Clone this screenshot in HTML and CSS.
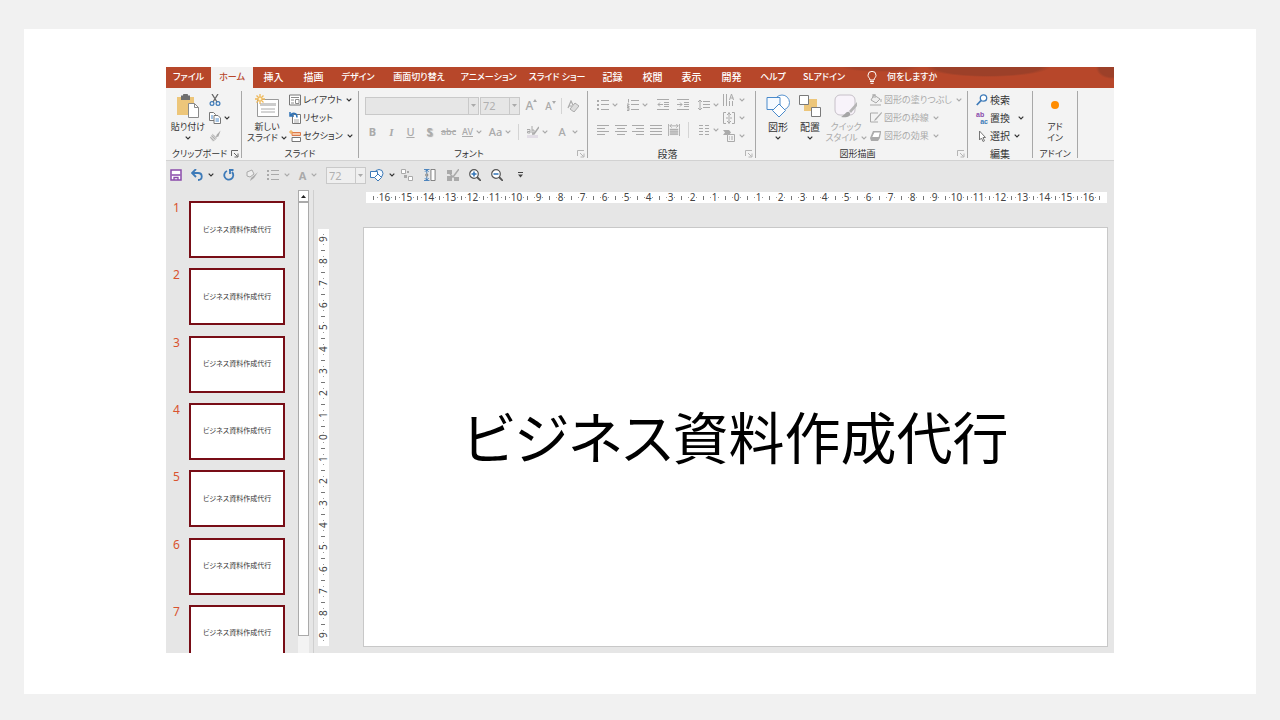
FILE: index.html
```html
<!DOCTYPE html>
<html lang="ja">
<head>
<meta charset="utf-8">
<title>ビジネス資料作成代行</title>
<link rel="stylesheet" href="styles.css">
</head>
<body>
<svg class="defs" aria-hidden="true">
  <symbol id="caret" viewBox="0 0 6 4"><path d="M.7.7 3 3 5.300.7" fill="none" stroke="currentColor" stroke-width="1.200"/></symbol>
  <symbol id="tri" viewBox="0 0 5 3"><path d="M0 0h5L2.500 3z" fill="currentColor"/></symbol>
  <symbol id="launch" viewBox="0 0 8 8"><path d="M.5 6V.5H7M3 3l3.500 3.500M7 3.500V7H3.500" fill="none" stroke="currentColor"/></symbol>
  <symbol id="bullets" viewBox="0 0 12 12"><path d="M4 1.500h8M4 5.500h8M4 10.500h8" stroke="currentColor"/><path d="M0 1h2v2H0zM0 5h2v2H0zM0 9h2v2H0z" fill="currentColor"/></symbol>
  <symbol id="shapes" viewBox="0 0 24 24"><circle cx="16" cy="8.500" r="7.500" fill="#fff" stroke="#5a94cf"/><path d="M1 3.500h13v12H1z" fill="#f6faff" stroke="#4a8acb"/><path d="M13 10l6.500 6.500L13 23l-6.500-6.500z" fill="#fff" stroke="#4a8acb"/></symbol>
  <symbol id="brush" viewBox="0 0 14 14"><path d="M13.500.5 9 5.500l-1 3 3-1z" fill="currentColor"/><path d="M4 5l5 4.500L6 13H4L1 9z" fill="currentColor" opacity=".45"/><path d="M4 5l5 4.500M3 6.500 7.500 11M1.500 8.500l4 4" stroke="currentColor"/></symbol>
</svg>
<main class="frame">
<div class="app">
  <nav class="tabs">
    <button class="tab kana t45">ファイル</button><button class="tab kana t42 active">ホーム</button><button class="tab t41">挿入</button><button class="tab t39">描画</button><button class="tab kana t50">デザイン</button><button class="tab kana t72">画面切り替え</button><button class="tab kana t67">アニメーション</button><button class="tab kana t70">スライド ショー</button><button class="tab t41">記録</button><button class="tab t39">校閲</button><button class="tab t39">表示</button><button class="tab t41">開発</button><button class="tab kana t42">ヘルプ</button><button class="tab kana t60">SLアドイン</button>
    <button class="tab kana tell"><svg width="10" height="13" viewBox="0 0 10 13"><path d="M3 9C3 7 1 6.500 1 4.300a4 4 0 0 1 8 0C9 6.500 7 7 7 9zM3 10.500h4M3.500 12.300h3" fill="none" stroke="#fff"/></svg>何をしますか</button>
  </nav>

  <div class="ribbon">
    <section class="group g-clip">
      <div class="body">
        <button class="big w36"><svg width="24" height="24" viewBox="0 0 24 24"><path d="M1 3h17v18H1z" fill="#edc67a"/><path d="M5 1.500h2a2.500 2.500 0 0 1 5 0h2V6H5z" fill="#6f6f6f"/><path d="M12.500 9.500h6l4 4v10h-10z" fill="#fff" stroke="#8a8a8a"/><path d="M18.500 9.500v4h4" fill="none" stroke="#8a8a8a"/></svg><span>貼り付け</span><svg class="caret"><use href="#caret"/></svg></button>
        <div class="stack">
          <button class="small" aria-label="切り取り"><svg class="ico" viewBox="0 0 12 12"><path d="M3 0l5 8M9 0 4 8" stroke="#666" stroke-width="1.300"/><circle cx="3" cy="9.500" r="1.900" fill="none" stroke="#3d7ab8" stroke-width="1.200"/><circle cx="9" cy="9.500" r="1.900" fill="none" stroke="#3d7ab8" stroke-width="1.200"/></svg></button>
          <button class="small" aria-label="コピー"><svg class="ico" viewBox="0 0 12 12"><path d="M.5 .5h4l2 2v6h-6z" fill="#fff" stroke="#777"/><path d="M5 3.500h4l2.500 2.500v5.500H5z" fill="#fff" stroke="#777"/><path d="M2 4h2M2 6h2M6.500 7h3.500M6.500 9h3.500" stroke="#4a8acb"/></svg><svg class="caret near"><use href="#caret"/></svg></button>
          <button class="small off" aria-label="書式のコピー" disabled><svg class="ico" viewBox="0 0 14 14"><use href="#brush"/></svg></button>
        </div>
      </div>
      <footer class="kana"><span>クリップボード</span><svg class="launch"><use href="#launch"/></svg></footer>
    </section>

    <section class="group g-slide">
      <div class="body">
        <button class="big w40"><svg width="24" height="24" viewBox="0 0 24 24"><path d="M2.500 5.500h21v17h-21z" fill="#fff" stroke="#999"/><path d="M5 9h16v3H5z" fill="#ccc"/><path d="M6 15h14M6 18h14" stroke="#aaa"/><path d="M5 0v10M0 5h10M1.500 1.500l7 7M8.500 1.500l-7 7" stroke="#efb95a" stroke-width="1.300"/><circle cx="5" cy="5" r="2" fill="#fff3d0" stroke="#efb95a"/></svg><span>新しい</span><span class="with-caret">スライド<svg class="caret"><use href="#caret"/></svg></span></button>
        <div class="stack">
          <button class="small"><svg class="ico" viewBox="0 0 12 12"><path d="M.5 1h11v10H.5z" fill="#fff" stroke="#777"/><path d="M2 3.500h8M6.500 5.500v4H10v-4zM2 6h3M2 9h3" fill="none" stroke="#8c8c8c"/></svg>レイアウト<svg class="caret"><use href="#caret"/></svg></button>
          <button class="small"><svg class="ico" viewBox="0 0 12 12"><path d="M3.500 2.500h8v9h-8z" fill="#fff" stroke="#777"/><path d="M5 8h5M5 10h5" stroke="#aaa"/><path d="M1 0v4h4M1.500 3.500C4 0 8 1 8 5.500" fill="none" stroke="#2f73b7" stroke-width="1.500"/></svg>リセット</button>
          <button class="small"><svg class="ico" viewBox="0 0 12 12"><path d="M3 2.500h8.500v3H3z" fill="#f6c8a8" stroke="#dd7a4a"/><path d="M3 7.500h8.500v4H3z" fill="#fff" stroke="#777"/><path d="M2 0v4M0 2h4" stroke="#efa94a"/></svg>セクション<svg class="caret"><use href="#caret"/></svg></button>
        </div>
      </div>
      <footer class="kana"><span>スライド</span></footer>
    </section>

    <section class="group g-font">
      <div class="body rows">
        <div class="line">
          <label class="combo wide"><select aria-label="フォント" disabled><option></option></select><i><svg class="tri"><use href="#tri"/></svg></i></label>
          <label class="combo size"><select aria-label="フォント サイズ" disabled><option>72</option></select><i><svg class="tri"><use href="#tri"/></svg></i></label>
          <button class="tool t12 first" disabled>A<svg class="mark" viewBox="0 0 4 3"><path d="M2 0l2 3H0z" fill="currentColor"/></svg></button><button class="tool t10" disabled>A<svg class="mark" viewBox="0 0 4 3"><path d="M2 3l2-3H0z" fill="currentColor"/></svg></button><span class="sep tight"></span>
          <button class="tool" aria-label="書式のクリア" disabled><svg class="ico" viewBox="0 0 12 12"><path d="M1 8 4 1l2 4M2 6h3" fill="none" stroke="currentColor" stroke-width="1.200"/><path d="M8 3l4 3-5 6-4-3z" fill="#ddd" stroke="currentColor"/></svg></button>
        </div>
        <div class="line">
          <button class="tool b" disabled>B</button><button class="tool i" disabled>I</button><button class="tool u" disabled>U</button><button class="tool s" disabled>S</button><button class="tool st" disabled>abc</button>
          <button class="tool drop" disabled><span class="spacing">AV</span><svg class="caret"><use href="#caret"/></svg></button>
          <button class="tool drop" disabled>Aa<svg class="caret"><use href="#caret"/></svg></button><span class="sep wide"></span>
          <button class="tool drop" aria-label="蛍光ペンの色" disabled><svg class="ico" viewBox="0 0 12 12"><path d="M0 4.500V3.500h3V7H.5V5.500H3M5 0v7h2V4H5" fill="none" stroke="currentColor"/><path d="M12 1 7 8H5" fill="none" stroke="currentColor" stroke-width="1.500"/><path d="M0 9h11v3H0z" fill="#e2dde6"/></svg><svg class="caret"><use href="#caret"/></svg></button>
          <button class="tool drop last" disabled>A<svg class="caret"><use href="#caret"/></svg></button>
        </div>
      </div>
      <footer class="kana"><span>フォント</span><svg class="launch off"><use href="#launch"/></svg></footer>
    </section>

    <section class="group g-para">
      <div class="body">
        <div class="rows para">
          <div class="line spread">
            <button class="tool auto" aria-label="箇条書き" disabled><svg class="ico" viewBox="0 0 12 12"><use href="#bullets"/></svg><svg class="caret"><use href="#caret"/></svg></button>
            <button class="tool auto" aria-label="段落番号" disabled><svg class="ico" viewBox="0 0 12 12"><path d="M4 1.500h8M4 5.500h8M4 10.500h8M1.500 0v3.500M0 5h2v1H.5v1.500H2.500M0 8.500h2v3H0M0 10h2" fill="none" stroke="currentColor"/></svg><svg class="caret"><use href="#caret"/></svg></button>
            <button class="tool auto" aria-label="インデント解除" disabled><svg class="ico" viewBox="0 0 12 12"><path d="M0 .5h12M7 3.500h5M7 5.500h5M7 7.500h5M0 10.500h12M6 5.500H1M3 3.500 1 5.500l2 2" fill="none" stroke="currentColor"/></svg></button>
            <button class="tool auto" aria-label="インデント" disabled><svg class="ico" viewBox="0 0 12 12"><path d="M0 .5h12M7 3.500h5M7 5.500h5M7 7.500h5M0 10.500h12M0 5.500h5M3 3.500l2 2-2 2" fill="none" stroke="currentColor"/></svg></button>
            <button class="tool auto" aria-label="行間" disabled><svg class="ico" viewBox="0 0 12 12"><path d="M5 2.500h7M5 5.500h7M5 8.500h7M2 1v10M0 3l2-2 2 2M0 9l2 2 2-2" fill="none" stroke="currentColor"/></svg><svg class="caret"><use href="#caret"/></svg></button>
          </div>
          <div class="line spread">
            <button class="tool auto" aria-label="左揃え" disabled><svg class="ico" viewBox="0 0 12 12"><path d="M0 1.500h12M0 4.500h8M0 7.500h12M0 10.500h8" stroke="currentColor"/></svg></button>
            <button class="tool auto" aria-label="中央揃え" disabled><svg class="ico" viewBox="0 0 12 12"><path d="M0 1.500h12M2 4.500h8M0 7.500h12M2 10.500h8" stroke="currentColor"/></svg></button>
            <button class="tool auto" aria-label="右揃え" disabled><svg class="ico" viewBox="0 0 12 12"><path d="M0 1.500h12M4 4.500h8M0 7.500h12M4 10.500h8" stroke="currentColor"/></svg></button>
            <button class="tool auto" aria-label="両端揃え" disabled><svg class="ico" viewBox="0 0 12 12"><path d="M0 1.500h12M0 4.500h12M0 7.500h12M0 10.500h12" stroke="currentColor"/></svg></button>
            <button class="tool auto" aria-label="均等割り付け" disabled><svg class="ico" viewBox="0 0 13 13"><path d="M.5 0v13M12.500 0v13M2 2h9M4 0 2 2l2 2M9 0l2 2-2 2" fill="none" stroke="currentColor"/><path d="M2 5h9v7H2z" fill="currentColor" opacity=".5"/><path d="M2 6h9M2 8.500h9M2 11h9" stroke="currentColor"/></svg></button><span class="sep"></span>
            <button class="tool auto" aria-label="段組み" disabled><svg class="ico" viewBox="0 0 12 12"><path d="M1 1.500h4M1 4.500h4M1 7.500h4M1 10.500h4M7 1.500h4M7 4.500h4M7 7.500h4M7 10.500h4" stroke="currentColor"/></svg><svg class="caret"><use href="#caret"/></svg></button>
          </div>
        </div>
        <div class="stack">
          <button class="small" aria-label="文字列の方向" disabled><svg class="ico" viewBox="0 0 12 12"><path d="M.5 0v12M3.500 0v12M6.500 7v5M9.500 7v5M6.500 6l2-6 2 6M7.500 4h3" fill="none" stroke="currentColor"/></svg><svg class="caret"><use href="#caret"/></svg></button>
          <button class="small" aria-label="文字の配置" disabled><svg class="ico" viewBox="0 0 12 12"><path d="M3 .5H.5v11H3M9 .5h2.500v11H9M3 6h6M6 0v5M4 3l2-2 2 2M6 7v5M4 9l2 2 2-2" fill="none" stroke="currentColor"/></svg><svg class="caret"><use href="#caret"/></svg></button>
          <button class="small" aria-label="SmartArt" disabled><svg class="ico" viewBox="0 0 12 12"><path d="M0 0h6l2 2.500L6 5H0l2-2.500z" fill="currentColor"/><path d="M4.500 4.500h7v7h-7z" fill="#f3f3f3" stroke="currentColor"/><path d="M6 7h1M8 7h2M6 9h1M8 9h2" stroke="currentColor"/></svg><svg class="caret"><use href="#caret"/></svg></button>
        </div>
      </div>
      <footer><span>段落</span><svg class="launch off"><use href="#launch"/></svg></footer>
    </section>

    <section class="group g-draw">
      <div class="body">
        <button class="big w32"><svg width="24" height="24"><use href="#shapes"/></svg><span>図形</span><svg class="caret"><use href="#caret"/></svg></button>
        <button class="big w32"><svg width="24" height="24" viewBox="0 0 24 24"><path d="M6 5h13v12H6z" fill="#edc67a"/><path d="M1.500 1.500h9v9h-9zM13.500 13.500h9v9h-9z" fill="#fff" stroke="#7a7a7a"/></svg><span>配置</span><svg class="caret"><use href="#caret"/></svg></button>
        <button class="big w40" disabled><svg width="24" height="24" viewBox="0 0 24 24"><rect x="1" y="1" width="20" height="20" rx="5" fill="#f8f3fa" stroke="#c6c0c8"/><path d="M23 8l-8 9 2 2 6-7z" fill="#b5b5b5"/><path d="M15 18c-3-1-4 3-8 5 5 1 10 0 9-4z" fill="#a5a5a5"/></svg><span>クイック</span><span class="with-caret">スタイル<svg class="caret"><use href="#caret"/></svg></span></button>
        <div class="stack">
          <button class="small" disabled><svg class="ico" viewBox="0 0 12 12"><path d="M4 1l6 4-4 4-5-3z" fill="#eee" stroke="currentColor"/><path d="M3 4V0h2v4M11 5v3" fill="none" stroke="currentColor"/><path d="M0 10h11v2H0z" fill="currentColor" opacity=".5"/></svg>図形の塗りつぶし<svg class="caret"><use href="#caret"/></svg></button>
          <button class="small" disabled><svg class="ico" viewBox="0 0 12 12"><path d="M8 1H.5v9H8" fill="none" stroke="currentColor"/><path d="M11.500 0 5 7l-1 2 2-1L12 1z" fill="currentColor"/></svg>図形の枠線<svg class="caret"><use href="#caret"/></svg></button>
          <button class="small" disabled><svg class="ico" viewBox="0 0 12 12"><path d="M3 1h8l-1 7-2 3H1L0 8z" fill="currentColor"/><path d="M4 2h6.500L9 7.500H1.500z" fill="#fff" stroke="currentColor"/></svg>図形の効果<svg class="caret"><use href="#caret"/></svg></button>
        </div>
      </div>
      <footer class="kana"><span>図形描画</span><svg class="launch off"><use href="#launch"/></svg></footer>
    </section>

    <section class="group g-edit">
      <div class="body">
        <div class="stack">
          <button class="small"><svg class="ico" viewBox="0 0 12 12"><circle cx="7.500" cy="4" r="3.200" fill="#fff" stroke="#3d7ab8" stroke-width="1.300"/><path d="M5 6.500.8 11" stroke="#3d7ab8" stroke-width="1.800"/></svg>検索</button>
          <button class="small"><span class="swap"><b>ab</b><b>ac</b></span>置換<svg class="caret push"><use href="#caret"/></svg></button>
          <button class="small"><svg class="ico" viewBox="0 0 12 12"><path d="M3.500 1v9l2-2 1.500 3.500 1.500-.7L7 7.500h2.500z" fill="#fff" stroke="#777"/></svg>選択<svg class="caret"><use href="#caret"/></svg></button>
        </div>
      </div>
      <footer><span>編集</span></footer>
    </section>

    <section class="group g-addin">
      <div class="body">
        <button class="big w36"><svg width="24" height="24" viewBox="0 0 24 24"><circle cx="12" cy="11" r="4" fill="#ff8c00"/></svg><span>アド</span><span>イン</span></button>
      </div>
      <footer class="kana"><span>アドイン</span></footer>
    </section>
  </div>

  <div class="quick">
    <button class="q20" aria-label="保存"><svg class="ico" viewBox="0 0 12 12"><path d="M1 1h10v10H1z" fill="#fff" stroke="#8a4bab" stroke-width="1.500"/><path d="M1.500 6h9M4 11V8.500h4V11" fill="none" stroke="#8a4bab" stroke-width="1.300"/></svg></button>
    <button class="q32" aria-label="元に戻す"><svg class="ico" viewBox="0 0 12 12"><path d="M5 0 1 4l4 4M1.500 4H7c5 0 5 7 0 7" fill="none" stroke="#3d7ab8" stroke-width="1.800"/></svg><svg class="caret"><use href="#caret"/></svg></button>
    <button class="q22" aria-label="繰り返し"><svg class="ico" viewBox="0 0 12 12"><path d="M4 2a4.500 4.500 0 1 0 5 1M6 1h4.500M7 1v4" fill="none" stroke="#3d7ab8" stroke-width="1.800"/></svg></button>
    <button class="q24" aria-label="書式のコピー" disabled><svg class="ico" viewBox="0 0 12 12"><path d="M1 3l5-2 2 4-4 3-3-1z" fill="#eee" stroke="currentColor"/><path d="M12 3 8 9l-4 3 1-3z" fill="currentColor"/></svg></button>
    <button class="q28" aria-label="箇条書き" disabled><svg class="ico"><use href="#bullets"/></svg><svg class="caret"><use href="#caret"/></svg></button>
    <button class="q32 bold" disabled>A<svg class="caret"><use href="#caret"/></svg></button>
    <label class="combo size"><select aria-label="サイズ" disabled><option>72</option></select><i><svg class="tri"><use href="#tri"/></svg></i></label>
    <button class="q28" aria-label="図形"><svg width="14" height="14" viewBox="0 0 14 12"><circle cx="9" cy="4.500" r="4" fill="#f6faff" stroke="#3d7ab8"/><path d="M.5 2.500h7v6h-7z" fill="#fff" stroke="#3d7ab8"/><path d="M8 5l3.500 3.500L8 12 4.500 8.500z" fill="#fff" stroke="#3d7ab8"/></svg><svg class="caret"><use href="#caret"/></svg></button>
    <button class="q22" aria-label="グループ化" disabled><svg class="ico" viewBox="0 0 12 12"><path d="M.5.5h4v4h-4zM7.500 7.500h4v4h-4z" fill="#fff" stroke="currentColor"/><path d="M6 2h2v2H6zM3 6h3v3H3z" fill="currentColor"/></svg></button>
    <button class="q24" aria-label="高さを揃える"><svg class="ico" viewBox="0 0 13 13"><path d="M0 .5h6M0 12.500h6M3 1v4M1 3l2-2 2 2M3 8v4M1 10l2 2 2-2" fill="none" stroke="#3d7ab8"/><path d="M2 5.500h2v2H2zM7.500.5H12v12H7.500z" fill="#fff" stroke="#777"/></svg></button>
    <button class="q22" aria-label="書式" disabled><svg class="ico" viewBox="0 0 12 12"><path d="M0 1h5v4H0zM0 7h5v5H0zM7 8h5v4H7z" fill="currentColor"/><path d="M12 0 6 8 3 5" fill="none" stroke="currentColor" stroke-width="1.500"/></svg></button>
    <button class="q22" aria-label="拡大"><svg class="ico" viewBox="0 0 12 12"><circle cx="5" cy="5" r="4.300" fill="#fff" stroke="#555" stroke-width="1.200"/><path d="M8 8l4 4" stroke="#555" stroke-width="1.800"/><path d="M2.500 5h5M5 2.500v5" stroke="#2f73b7" stroke-width="1.500"/></svg></button>
    <button class="q22" aria-label="縮小"><svg class="ico" viewBox="0 0 12 12"><circle cx="5" cy="5" r="4.300" fill="#fff" stroke="#555" stroke-width="1.200"/><path d="M8 8l4 4" stroke="#555" stroke-width="1.800"/><path d="M2.500 5h5" stroke="#2f73b7" stroke-width="1.500"/></svg></button>
    <button class="q24" aria-label="カスタマイズ"><svg width="5" height="6" viewBox="0 0 5 6"><path d="M0 .5h5" stroke="#444"/><path d="M0 2.500h5L2.500 5.500z" fill="#444"/></svg></button>
  </div>

  <div class="work">
    <ol class="thumbs">
      <li><span>1</span><div>ビジネス資料作成代行</div></li>
      <li><span>2</span><div>ビジネス資料作成代行</div></li>
      <li><span>3</span><div>ビジネス資料作成代行</div></li>
      <li><span>4</span><div>ビジネス資料作成代行</div></li>
      <li><span>5</span><div>ビジネス資料作成代行</div></li>
      <li><span>6</span><div>ビジネス資料作成代行</div></li>
      <li><span>7</span><div>ビジネス資料作成代行</div></li>
    </ol>
    <div class="scroll"><button aria-label="上へ"><svg width="5" height="3" viewBox="0 0 5 3"><path d="M0 3h5L2.500 0z" fill="#222"/></svg></button><div class="thumb"></div></div>
    <div class="editor">
      <div class="ruler vertical" data-max="9"></div>
      <div class="stage">
        <div class="ruler horizontal" data-max="16"></div>
        <article class="slide"><h1>ビジネス資料作成代行</h1></article>
      </div>
    </div>
  </div>
</div>
</main>
<script src="rulers.js"></script>
</body>
</html>
```
FILE: styles.css
```css
* { box-sizing: border-box; }

body {
  margin: 0;
  min-height: 100vh;
  display: flex;
  padding: 29px 24px 26px;
  background: #f1f1f1;
  font-family: "Noto Sans CJK JP", sans-serif;
  font-size: 10px;
  line-height: 12px;
  font-feature-settings: "palt";
  color: #333;
}

.defs { position: absolute; width: 0; height: 0; }

button {
  border: 0;
  padding: 0;
  background: none;
  font: inherit;
  font-feature-settings: inherit;
  color: inherit;
  white-space: nowrap;
}
button:disabled { color: #aaa; }
svg { flex: none; }

.frame {
  flex: 1;
  display: flex;
  min-width: 0;
  padding: 38px 142px 41px;
  background: #fff;
}
.app {
  flex: 1;
  min-width: 0;
  display: flex;
  flex-direction: column;
  background: #e6e6e6;
  overflow: hidden;
}

/* Tabs */
.tabs {
  display: flex;
  flex: none;
  height: 21px;
  color: #fff;
  font-weight: 500;
  background:
    radial-gradient(ellipse 62px 10px at 822px 0, #9c4029 85%, transparent),
    radial-gradient(ellipse 16px 11px at 946px 1px, #9c4029 80%, transparent),
    radial-gradient(ellipse 40px 5px at 715px 0, #a5422a 70%, transparent),
    #b7472a;
}
.tab { display: flex; align-items: center; justify-content: center; flex: none; padding-bottom: 1px; }
.tab.active { background: #f3f3f3; color: #b7472a; }
.kana { font-size: 9px; }
.t39 { width: 39px; }
.t41 { width: 41px; }
.t42 { width: 42px; }
.t45 { width: 45px; }
.t50 { width: 50px; }
.t60 { width: 60px; }
.t67 { width: 67px; }
.t70 { width: 70px; }
.t72 { width: 72px; }
.tell { gap: 10px; margin-left: 13px; }

/* Ribbon */
.ribbon {
  display: flex;
  flex: none;
  height: 73px;
  padding: 3px 0 0;
  background: #f3f3f3;
  border-bottom: 1px solid #d2d2d2;
}
.group {
  display: flex;
  flex-direction: column;
  flex: none;
  margin-bottom: 2px;
  border-right: 1px solid #a8a8a8;
}
.g-clip { width: 76px; }
.g-slide { width: 117px; }
.g-font { width: 229px; }
.g-para { width: 168px; }
.g-draw { width: 212px; }
.g-edit { width: 65px; }
.g-addin { width: 45px; }
.body { flex: 1; display: flex; padding: 0 4px; align-items: flex-start; }
.group footer {
  display: flex;
  align-items: center;
  height: 9px;
  padding: 0 2px;
}
.group footer span { flex: 1; text-align: center; }
.launch { width: 8px; height: 8px; color: #666; }
.launch.off { color: #b5b5b5; }

.big {
  display: flex;
  flex-direction: column;
  align-items: center;
  padding-top: 3px;
  line-height: 11px;
}
.big > span { height: 11px; }
.big > span:first-of-type { margin-top: 3px; }
.big > .caret { margin-top: 4px; }
.with-caret { display: flex; align-items: center; gap: 3px; font-size: 9px; }
.w32 { width: 32px; }
.w36 { width: 36px; font-size: 9px; }
.w40 { width: 40px; font-size: 9px; }
.stack { display: flex; flex-direction: column; margin-left: 3px; }
.small { display: flex; align-items: center; gap: 2px; height: 18px; }
.small .caret { margin-left: 2px; }
.small .caret.push { margin-left: 6px; }
.small .caret.near { margin-left: 1px; }
.ico { width: 12px; height: 12px; }
.caret { width: 6px; height: 4px; }
.tri { width: 5px; height: 3px; }
.mark { width: 4px; height: 3px; align-self: flex-start; margin-top: 2px; }
.swap {
  width: 12px;
  font: bold 7px/7px "Liberation Sans", sans-serif;
  color: #3d7ab8;
}
.swap b { display: block; }
.swap b:first-child { color: #8a4bab; text-align: left; }
.swap b:last-child { text-align: right; }
.g-slide .body { padding-left: 5px; }
.g-slide .stack { margin-left: 2px; }
.g-slide .small, .g-draw .small { font-size: 9px; }
.g-edit .stack { margin-left: 4px; }
.g-draw .body { padding-left: 6px; }
.g-draw .stack { margin-left: 4px; }

.rows { display: flex; flex-direction: column; gap: 7px; padding-top: 5px; }
.line { display: flex; align-items: center; height: 19px; }
.g-font .body { padding-left: 6px; }
.g-font .line + .line { margin-left: -2px; }
.spread { justify-content: space-between; height: 18px; align-self: stretch; }
.para { width: 122px; margin-left: 5px; }
.g-para .stack { margin-left: 4px; }
.auto { gap: 3px; }

.combo {
  display: flex;
  height: 18px;
  border: 1px solid #c9c9c9;
  background: #e6e6e6;
}
.combo select {
  flex: 1;
  min-width: 0;
  appearance: none;
  border: 0;
  padding: 0 2px;
  background: none;
  font: 11px "Noto Sans", sans-serif;
  color: #b0b0b0;
  opacity: 1;
}
.combo i {
  display: flex;
  align-items: center;
  justify-content: center;
  width: 10px;
  border-left: 1px solid #c9c9c9;
  color: #aaa;
}
.combo.wide { width: 114px; margin-right: 1px; }
.combo.size { width: 40px; }
.sep { width: 1px; height: 16px; margin: 0 3px; background: #d4d4d4; }
.sep.wide { margin: 0 4px; }
.sep.tight { margin: 0 1px; }
.tool {
  display: flex;
  align-items: center;
  justify-content: center;
  width: 19px;
  font: 500 11px "Noto Sans", sans-serif;
}
.tool.auto { width: auto; }
.tool.t12 { font-size: 12px; }
.tool.t10 { font-size: 10px; }
.tool.first { margin-left: 2px; }
.tool.drop { width: 28px; gap: 3px; }
.tool.last { width: 34px; gap: 6px; }
.tool.b, .tool.s { font-weight: bold; }
.tool.i { font-family: "Liberation Serif", serif; font-style: italic; font-weight: bold; }
.tool.u { text-decoration: underline; }
.tool.s { text-shadow: 1px 1px 1px #aaa; }
.tool.st { text-decoration: line-through; font-size: 9px; }
.spacing { font-size: 9px; line-height: 9px; border-bottom: 1px solid #aaa; }

/* Quick access */
.quick {
  display: flex;
  flex: none;
  align-items: center;
  height: 29px;
  padding-bottom: 1px;
}
.quick button { display: flex; align-items: center; justify-content: center; gap: 5px; }
.quick .combo { height: 17px; margin: 0 2px; background: #efefef; }
.quick .bold { font: bold 11px "Noto Sans", sans-serif; }
.q20 { width: 20px; }
.q22 { width: 22px; }
.q24 { width: 24px; }
.q28 { width: 28px; }
.q32 { width: 32px; }

/* Workspace */
.work { flex: 1; display: flex; min-height: 0; }
.thumbs {
  display: flex;
  flex-direction: column;
  justify-content: space-between;
  width: 132px;
  margin: 11px 0 -9px;
  padding: 0;
  list-style: none;
}
.thumbs li { display: flex; }
.thumbs span {
  width: 23px;
  padding-left: 7px;
  font: 12px/13px "Noto Sans", sans-serif;
  color: #d9532f;
}
.thumbs div {
  display: flex;
  align-items: center;
  justify-content: center;
  width: 96px;
  height: 57px;
  padding-bottom: 2px;
  border: 2px solid #780d16;
  background: #fff;
  font-size: 7px;
}
.scroll {
  display: flex;
  flex-direction: column;
  width: 11px;
  padding-bottom: 17px;
  background: #f3f3f3;
}
.scroll button {
  display: flex;
  align-items: center;
  justify-content: center;
  height: 12px;
  border: 1px solid #aaa;
  background: #fff;
}
.scroll .thumb { flex: 1; border: 1px solid #aaa; background: #fff; }
.editor {
  flex: 1;
  display: flex;
  min-width: 0;
  margin-left: 4px;
  padding: 2px 6px 6px 4px;
  border-left: 1px solid #cfcfcf;
}
.stage { flex: 1; display: flex; flex-direction: column; min-width: 0; margin-left: 34px; }
.slide {
  flex: 1;
  display: flex;
  align-items: center;
  justify-content: center;
  margin-top: 24px;
  padding-bottom: 4px;
  border: 1px solid #c8c8c8;
  background: #fff;
  color: #000;
}
.slide h1 { margin: 0; font-size: 56px; line-height: 60px; font-weight: 400; white-space: nowrap; }

.ruler {
  display: flex;
  align-items: center;
  background: #fff;
  font: 10px/11px "Noto Sans", sans-serif;
  color: #444;
}
.ruler span { flex: 1 1 0; display: flex; align-items: center; justify-content: center; gap: 1px; }
.ruler i { width: 1px; height: 1px; background: #999; }
.ruler b { width: 1px; height: 4px; background: #777; }
.ruler.horizontal { height: 11px; margin: 0 1px 0 3px; padding: 0 7px; }
.ruler.vertical {
  width: 11px;
  margin: 37px 0 1px;
  writing-mode: vertical-rl;
  transform: rotate(180deg);
}
.ruler.vertical span { gap: 2px; }
.ruler.vertical b { width: 4px; height: 1px; }
```
FILE: rulers.js
```js
document.querySelectorAll('.ruler').forEach(function (ruler) {
  var max = Number(ruler.dataset.max);
  var cells = [];
  for (var n = -max; n <= max; n++) {
    cells.push('<span><i></i>' + Math.abs(n) + '<i></i></span>');
  }
  ruler.innerHTML = cells.join('<b></b>');
  if (ruler.classList.contains('horizontal')) {
    ruler.insertAdjacentHTML('afterbegin', '<b></b>');
    ruler.insertAdjacentHTML('beforeend', '<b></b>');
  }
});
```
